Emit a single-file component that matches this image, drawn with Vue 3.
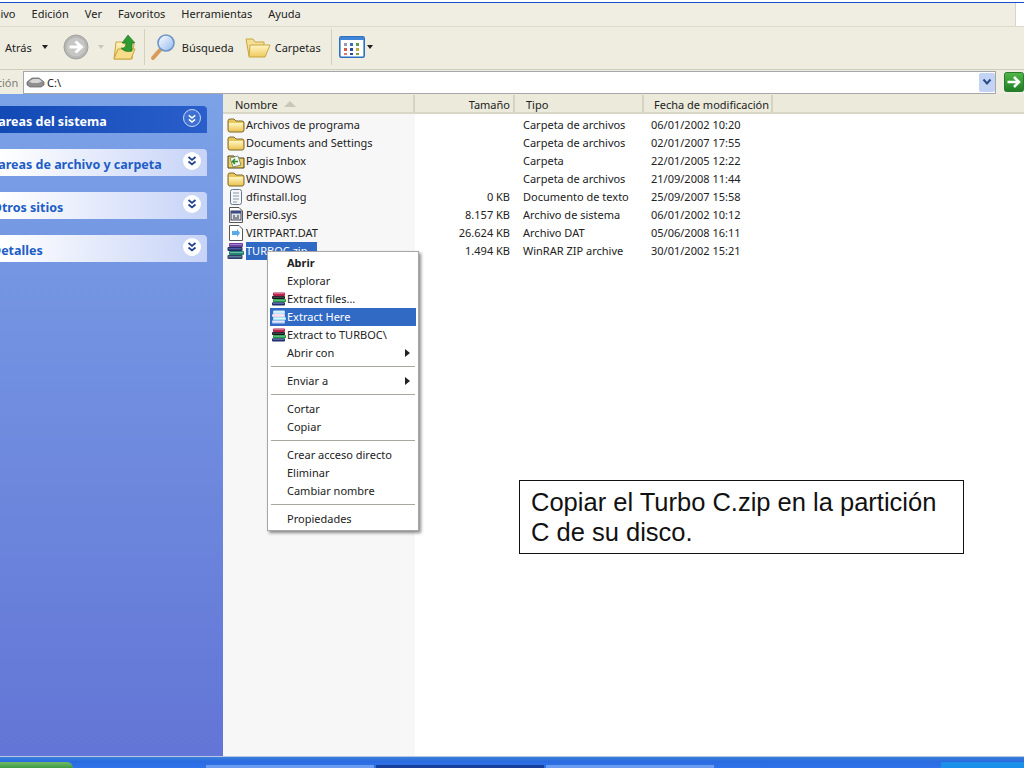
<template>
  <div class="page">
    <svg class="defs" width="0" height="0">
      <defs>
        <linearGradient id="fold" x1="0" y1="0" x2="0" y2="1">
          <stop offset="0" stop-color="#fff6c4" />
          <stop offset="1" stop-color="#efc95e" />
        </linearGradient>
        <linearGradient id="glass" x1="0" y1="0" x2="1" y2="1">
          <stop offset="0" stop-color="#ffffff" />
          <stop offset="1" stop-color="#8fb8ee" />
        </linearGradient>
        <linearGradient id="goBtn" x1="0" y1="0" x2="0" y2="1">
          <stop offset="0" stop-color="#52b848" />
          <stop offset="1" stop-color="#1d7c24" />
        </linearGradient>
        <symbol id="ico-folder" viewBox="0 0 18 16">
          <path d="M1 4 Q1 2 3 2 H7 L9 4 H15 Q17 4 17 6 V13 Q17 15 15 15 H3 Q1 15 1 13 Z" fill="#e9c65c" stroke="#7d6a2c" />
          <path d="M2 6 H16 V13.5 H2 Z" fill="url(#fold)" />
        </symbol>
        <symbol id="ico-inbox" viewBox="0 0 18 16">
          <path d="M1 3 H7 L9 5 H17 V15 H1 Z" fill="#efcf66" stroke="#4c4218" />
          <path d="M3 5 L11 3 L14 12 L6 14 Z" fill="#f4f8ea" stroke="#56705a" stroke-width="0.7" />
          <path d="M5.5 8.5 H11 M8 6 L5.5 8.5 L8 11" fill="none" stroke="#2b8a2c" stroke-width="1.5" />
        </symbol>
        <symbol id="ico-log" viewBox="0 0 16 18">
          <rect x="2.5" y="1.5" width="11" height="15" rx="2" fill="#f5f7f9" stroke="#68768c" />
          <path d="M5 5 H11 M5 8 H11 M5 11 H11 M5 14 H9" stroke="#8a97a8" />
        </symbol>
        <symbol id="ico-sys" viewBox="0 0 16 18">
          <path d="M1.5 1.5 H11 L14.5 5 V16.5 H1.5 Z" fill="#fff" stroke="#555" />
          <rect x="3" y="5" width="10" height="9" fill="#dfe3ec" stroke="#3a3f5a" />
          <rect x="3" y="5" width="10" height="2.5" fill="#3c4a8a" />
          <path d="M5 10 H7 M9 10 H11 M5 12 H11" stroke="#333" />
        </symbol>
        <symbol id="ico-dat" viewBox="0 0 16 18">
          <path d="M1.5 1.5 H11 L14.5 5 V16.5 H1.5 Z" fill="#fff" stroke="#555" />
          <path d="M4 7 H9 V5 L12 9 L9 13 V11 H4 Z" fill="#5aa9e6" />
        </symbol>
        <symbol id="ico-rar" viewBox="0 0 16 14">
          <rect x="2" y="0.5" width="12" height="3.4" rx="1" fill="#b3204a" />
          <path d="M3 1.6 H13" stroke="#f3a8b8" stroke-width="0.6" />
          <rect x="1" y="3.9" width="13" height="3.2" rx="1" fill="#16161c" />
          <path d="M2 5.2 H13" stroke="#8a8a90" stroke-width="0.6" />
          <rect x="2" y="7.1" width="13" height="3.2" rx="1" fill="#1f9a48" />
          <path d="M3 8.2 H14" stroke="#b6eec6" stroke-width="0.6" />
          <rect x="1" y="10.3" width="13" height="3.2" rx="1" fill="#1c2c68" />
          <path d="M2 11.6 H13" stroke="#8a9ad8" stroke-width="0.6" />
        </symbol>
        <symbol id="ico-rar-sel" viewBox="0 0 16 14">
          <rect x="2" y="0.5" width="12" height="3.4" rx="1" fill="#bfe4f8" />
          <path d="M3 1.8 H13" stroke="#ffffff" stroke-width="0.7" />
          <rect x="1" y="3.9" width="13" height="3.2" rx="1" fill="#f1d0e8" />
          <path d="M2 5.2 H13" stroke="#ffffff" stroke-width="0.7" />
          <rect x="2" y="7.1" width="13" height="3.2" rx="1" fill="#a8e4ee" />
          <path d="M3 8.4 H14" stroke="#ffffff" stroke-width="0.7" />
          <rect x="1" y="10.3" width="13" height="3.2" rx="1" fill="#bcd0f6" />
          <path d="M2 11.6 H13" stroke="#ffffff" stroke-width="0.7" />
        </symbol>
        <symbol id="ico-rar-file" viewBox="0 0 18 18">
          <rect x="2" y="1" width="14" height="4" rx="1" fill="#6a3f9e" />
          <path d="M3 2.6 H15" stroke="#c4a6e6" stroke-width="0.7" />
          <rect x="0.5" y="5" width="15" height="4" rx="1" fill="#1f2f6a" />
          <path d="M1.5 6.8 H14.5" stroke="#7e8fd0" stroke-width="0.7" />
          <rect x="2" y="9" width="15" height="4" rx="1" fill="#22806c" />
          <path d="M3 10.6 H16" stroke="#9fe0d0" stroke-width="0.7" />
          <rect x="0.5" y="13" width="15" height="4" rx="1" fill="#2b4468" />
          <path d="M1.5 14.8 H14.5" stroke="#a0b4d0" stroke-width="0.7" />
        </symbol>
        <symbol id="ico-chev" viewBox="0 0 18 18">
          <path d="M5.5 5 L9 8 L12.5 5 M5.5 9.5 L9 12.5 L12.5 9.5" fill="none" stroke="currentColor" stroke-width="1.7" />
        </symbol>
      </defs>
    </svg>

    <div class="menubar">
      <div class="menu-items">
        <span v-for="m in menus" :key="m">{{ m }}</span>
      </div>
      <div class="flag"></div>
    </div>

    <div class="toolbar">
      <span class="back-label">Atrás</span>
      <span class="tri back-tri"></span>
      <svg class="forward" width="26" height="26" viewBox="0 0 26 26">
        <circle cx="13" cy="13" r="12" fill="#b6b6b4" stroke="#a2a2a0" />
        <circle cx="13" cy="13" r="9.5" fill="#c6c6c4" />
        <path d="M6.5 13 H17 M12.5 7.5 L18.5 13 L12.5 18.5" fill="none" stroke="#fff" stroke-width="3" />
      </svg>
      <span class="tri tri-pale"></span>
      <svg class="up" width="24" height="26" viewBox="0 0 24 26">
        <path d="M3 8 H9 L11 10 H21 L19 25 H1 Z" fill="url(#fold)" stroke="#c9a63e" />
        <path d="M5 15 H22 L18 25 H1 Z" fill="#f7dd8a" stroke="#c9a63e" />
        <path d="M15 1 L22 9 H19 V17 Q12 19 8 14 Q13 15 13 9 H9 Z" fill="#2e9b32" stroke="#1b6d20" stroke-width="0.6" />
      </svg>
      <div class="tool-sep"></div>
      <svg class="search" width="28" height="28" viewBox="0 0 28 28">
        <path d="M10 17 L3 25" stroke="#d99a5a" stroke-width="4" stroke-linecap="round" />
        <circle cx="16" cy="10" r="8" fill="url(#glass)" stroke="#6f94c6" stroke-width="1.6" />
      </svg>
      <span class="tool-label">Búsqueda</span>
      <svg class="folders" width="26" height="24" viewBox="0 0 26 24">
        <path d="M1 4 H8 L10 7 H19 V21 H4 Z" fill="#f4df98" stroke="#c9a63e" />
        <path d="M5 10 H25 L20 22 H4 Z" fill="url(#fold)" stroke="#c9a63e" />
      </svg>
      <span class="tool-label carpetas">Carpetas</span>
      <div class="tool-sep second"></div>
      <svg class="views" width="26" height="22" viewBox="0 0 26 22">
        <rect x="0.8" y="0.8" width="24.4" height="20.4" rx="1.5" fill="#fff" stroke="#2e6fc2" stroke-width="1.6" />
        <rect x="1" y="1" width="24" height="3" fill="#3f86d8" />
        <g>
          <rect x="5" y="7" width="3" height="3" fill="#9a9ab0" />
          <rect x="11" y="7" width="3" height="3" fill="#3c6cc0" />
          <rect x="17" y="7" width="3" height="3" fill="#5aa048" />
          <rect x="5" y="12" width="3" height="3" fill="#d85a4a" />
          <rect x="11" y="12" width="3" height="3" fill="#2b4a9a" />
          <rect x="17" y="12" width="3" height="3" fill="#c8a83a" />
          <rect x="5" y="17" width="3" height="2" fill="#e07a6a" />
          <rect x="11" y="17" width="3" height="2" fill="#2b4a9a" />
          <rect x="17" y="17" width="3" height="2" fill="#8a9a3a" />
        </g>
      </svg>
      <span class="tri view-tri"></span>
    </div>

    <div class="address">
      <span class="addr-label">Dirección</span>
      <div class="addr-input">
        <svg width="19" height="12" viewBox="0 0 19 12">
          <path d="M1 6 L6 2 H13 L18 6 V9 L15 11 H4 L1 9 Z" fill="#8f8f8f" stroke="#5c5c5c" stroke-width="0.7" />
          <path d="M3 5.5 L7 3 H13 L16 5.5 L12 7 H6 Z" fill="#d6d6d6" />
        </svg>
        <span class="addr-text">C:\</span>
        <div class="addr-drop">
          <svg width="10" height="8" viewBox="0 0 10 8">
            <path d="M1.5 1.5 L5 5.5 L8.5 1.5" fill="none" stroke="#2c4a86" stroke-width="2" />
          </svg>
        </div>
      </div>
      <svg class="go" width="20" height="20" viewBox="0 0 20 20">
        <rect x="0.5" y="0.5" width="19" height="19" rx="2" fill="url(#goBtn)" stroke="#2a7a2e" />
        <path d="M3.5 10 H14 M10 5 L15 10 L10 15" fill="none" stroke="#fff" stroke-width="2.6" />
      </svg>
    </div>

    <div class="main">
      <aside class="sidebar">
        <div v-for="(p, i) in panels" :key="p" class="panel" :class="{ primary: i === 0 }">
          <span class="panel-title">{{ p }}</span>
          <span class="chev-wrap">
            <svg width="18" height="18"><use href="#ico-chev" /></svg>
          </span>
        </div>
      </aside>

      <section class="files">
        <div class="file-grid head">
          <div class="h-name">Nombre <span class="sort"></span></div>
          <div class="h-size">Tamaño</div>
          <div class="h-type">Tipo</div>
          <div class="h-date">Fecha de modificación</div>
        </div>
        <div class="file-body">
          <div class="name-col"></div>
          <div v-for="f in files" :key="f.name" class="file-grid row">
            <div class="c-name">
              <svg class="file-ico" width="18" height="18"><use :href="'#ico-' + f.icon" /></svg>
              <span :class="{ sel: f.selected }">{{ f.name }}</span>
            </div>
            <div class="c-size">{{ f.size }}</div>
            <div class="c-type">{{ f.type }}</div>
            <div class="c-date">{{ f.date }}</div>
          </div>
        </div>
      </section>
    </div>

    <div class="taskbar">
      <div class="start"></div>
      <div class="tasks">
        <div class="task"></div>
        <div class="task active"></div>
        <div class="task"></div>
      </div>
      <div class="tray"></div>
    </div>

    <div class="ctx">
      <template v-for="(it, i) in ctxItems" :key="i">
        <div v-if="it.sep" class="ctx-sep"></div>
        <div v-else class="ctx-item" :class="{ hot: it.hot, strong: it.strong }">
          <svg v-if="it.rar" class="ctx-ico" width="16" height="14">
            <use :href="it.hot ? '#ico-rar-sel' : '#ico-rar'" />
          </svg>
          <span>{{ it.label }}</span>
          <span v-if="it.sub" class="ctx-arrow"></span>
        </div>
      </template>
    </div>

    <div class="note">Copiar el Turbo C.zip en la partición C de su disco.</div>
  </div>
</template>

<script setup>
const menus = ["Archivo", "Edición", "Ver", "Favoritos", "Herramientas", "Ayuda"]

const panels = [
  "Tareas del sistema",
  "Tareas de archivo y carpeta",
  "Otros sitios",
  "Detalles"
]

const files = [
  { name: "Archivos de programa", size: "", type: "Carpeta de archivos", date: "06/01/2002 10:20", icon: "folder" },
  { name: "Documents and Settings", size: "", type: "Carpeta de archivos", date: "02/01/2007 17:55", icon: "folder" },
  { name: "Pagis Inbox", size: "", type: "Carpeta", date: "22/01/2005 12:22", icon: "inbox" },
  { name: "WINDOWS", size: "", type: "Carpeta de archivos", date: "21/09/2008 11:44", icon: "folder" },
  { name: "dfinstall.log", size: "0 KB", type: "Documento de texto", date: "25/09/2007 15:58", icon: "log" },
  { name: "Persi0.sys", size: "8.157 KB", type: "Archivo de sistema", date: "06/01/2002 10:12", icon: "sys" },
  { name: "VIRTPART.DAT", size: "26.624 KB", type: "Archivo DAT", date: "05/06/2008 16:11", icon: "dat" },
  { name: "TURBOC.zip", size: "1.494 KB", type: "WinRAR ZIP archive", date: "30/01/2002 15:21", icon: "rar-file", selected: true }
]

const ctxItems = [
  { label: "Abrir", strong: true },
  { label: "Explorar" },
  { label: "Extract files...", rar: true },
  { label: "Extract Here", rar: true, hot: true },
  { label: "Extract to TURBOC\\", rar: true },
  { label: "Abrir con", sub: true },
  { sep: true },
  { label: "Enviar a", sub: true },
  { sep: true },
  { label: "Cortar" },
  { label: "Copiar" },
  { sep: true },
  { label: "Crear acceso directo" },
  { label: "Eliminar" },
  { label: "Cambiar nombre" },
  { sep: true },
  { label: "Propiedades" }
]
</script>

<style>
html,
body {
  margin: 0;
  overflow: hidden;
}
</style>

<style scoped>
.page {
  position: relative;
  width: 1024px;
  height: 768px;
  overflow: hidden;
  display: flex;
  flex-direction: column;
  background: #fff;
  font-family: "Noto Sans", "Liberation Sans", sans-serif;
  font-size: 11px;
  color: #222;
}

.defs {
  position: absolute;
}

/* menu */
.menubar {
  height: 25px;
  margin-top: 2px;
  display: flex;
  background: #f0eee2;
  border-top: 1px solid #1550d0;
  box-sizing: border-box;
  border-bottom: 1px solid #dcdacb;
}

.menu-items {
  flex: 1;
  display: flex;
  align-items: center;
  gap: 16px;
  margin-left: -23px;
  padding-bottom: 2px;
}

.flag {
  width: 8px;
  background: #fff;
  border-left: 1px solid #d6d3c2;
}

/* toolbar */
.toolbar {
  height: 43px;
  display: flex;
  align-items: center;
  padding-bottom: 2px;
  background: #efede0;
  border-bottom: 1px solid #cfcdbd;
  box-sizing: border-box;
}

.back-label {
  margin-left: 5px;
}

.tri {
  width: 0;
  height: 0;
  border-left: 3.5px solid transparent;
  border-right: 3.5px solid transparent;
  border-top: 4px solid #222;
}

.back-tri {
  margin-left: 10px;
}

.forward {
  margin-left: 15px;
}

.tri-pale {
  margin-left: 9px;
  border-top-color: #c8c8c0;
}

.up {
  margin-left: 9px;
}

.tool-sep {
  width: 1px;
  height: 36px;
  margin-left: 7px;
  background: #d3d0bf;
}

.search {
  margin-left: 5px;
}

.tool-label {
  margin-left: 4px;
}

.folders {
  margin-left: 11px;
}

.carpetas {
  margin-left: 4px;
}

.second {
  margin-left: 10px;
}

.views {
  margin-left: 7px;
}

.view-tri {
  margin-left: 2px;
}

/* address */
.address {
  height: 24px;
  display: flex;
  align-items: center;
  background: #efede0;
  position: relative;
}

.addr-label {
  margin-left: -30px;
  width: 53px;
  color: #7d7c73;
  white-space: nowrap;
  flex: none;
}

.addr-input {
  width: 973px;
  height: 23px;
  box-sizing: border-box;
  border: 1px solid #a7a6aa;
  background: #fff;
  display: flex;
  align-items: center;
  padding-left: 2px;
  gap: 2px;
  flex: none;
}

.addr-text {
  flex: 1;
}

.addr-drop {
  width: 16px;
  height: 19px;
  background: #c3d3f5;
  border-radius: 2px;
  display: flex;
  align-items: center;
  justify-content: center;
}

.go {
  margin-left: 8px;
  flex: none;
}

/* main */
.main {
  flex: 1;
  display: flex;
  min-height: 0;
}

.sidebar {
  width: 223px;
  flex: none;
  box-sizing: border-box;
  padding-top: 12px;
  padding-right: 16px;
  display: flex;
  flex-direction: column;
  gap: 16px;
  background: linear-gradient(#7ba2e7, #6375d6);
}

.panel {
  height: 27px;
  display: flex;
  align-items: center;
  justify-content: space-between;
  border-radius: 0 4px 0 0;
  background: linear-gradient(90deg, #fff, #c6d3f7);
  color: #215dc6;
  font-size: 12.5px;
  font-weight: 700;
  overflow: hidden;
}

.panel.primary {
  background: linear-gradient(90deg, #124ab5, #2a5fcb);
  color: #fff;
}

.panel-title {
  margin-left: -8px;
  padding-top: 4px;
  white-space: nowrap;
}

.chev-wrap {
  width: 18px;
  height: 18px;
  margin-right: 6px;
  margin-top: -3px;
  border-radius: 50%;
  background: #fff;
  color: #1c3f8e;
  display: flex;
}

.primary .chev-wrap {
  background: #3e71d3;
  color: #fff;
  border: 1px solid #c9d8f5;
  box-sizing: border-box;
}

.files {
  flex: 1;
  display: flex;
  flex-direction: column;
  min-width: 0;
}

.file-grid {
  display: grid;
  grid-template-columns: 192px 100px 129px 129px;
}

.head {
  height: 20px;
  align-items: center;
  background: #ebeadb;
  border-bottom: 2px solid #d8d6c6;
  box-sizing: border-box;
  padding-top: 1px;
  white-space: nowrap;
}

.head > div {
  height: 17px;
  line-height: 20px;
  border-right: 2px solid #d6d3c2;
  box-sizing: border-box;
}

.h-name {
  padding-left: 12px;
}

.sort {
  display: inline-block;
  width: 0;
  height: 0;
  margin-left: 4px;
  margin-bottom: 2px;
  border-left: 6px solid transparent;
  border-right: 6px solid transparent;
  border-bottom: 6px solid #c9c7b6;
}

.h-size {
  text-align: right;
  padding-right: 3px;
}

.h-type {
  padding-left: 11px;
}

.h-date {
  padding-left: 10px;
}

.file-body {
  flex: 1;
  position: relative;
  padding-top: 2px;
}

.name-col {
  position: absolute;
  left: 0;
  top: 0;
  bottom: 0;
  width: 192px;
  background: #f7f7f7;
}

.row {
  position: relative;
  height: 18px;
  align-items: center;
  white-space: nowrap;
}

.c-size,
.c-type,
.c-date,
.c-name span {
  padding-bottom: 1px;
}

.c-name {
  display: flex;
  align-items: center;
  padding-left: 4px;
  gap: 1px;
}

.file-ico {
  flex: none;
}

.sel {
  background: #316ac5;
  color: #fff;
  width: 71px;
  line-height: 17px;
}

.c-size {
  text-align: right;
  padding-right: 5px;
}

.c-type {
  padding-left: 8px;
}

.c-date {
  padding-left: 7px;
}

/* taskbar */
.taskbar {
  height: 11px;
  flex: none;
  display: flex;
  align-items: flex-end;
  background: linear-gradient(#3a7fd8 0, #2a6ce0 40%, #2f72ea);
  border-top: 1px solid #b8c6e8;
  box-sizing: content-box;
}

.start {
  width: 73px;
  height: 6px;
  background: linear-gradient(#6fbb6a, #3f9a45);
  border-radius: 0 6px 0 0;
}

.tasks {
  margin-left: 133px;
  width: 735px;
  display: flex;
  gap: 2px;
}

.task {
  width: 168px;
  height: 3px;
  background: #6a9cf0;
}

.task.active {
  background: #153f9a;
}

.tray {
  flex: 1;
  height: 6px;
  background: #1a90e8;
}

/* context menu */
.ctx {
  position: absolute;
  left: 267px;
  top: 251px;
  width: 152px;
  height: 280px;
  box-sizing: border-box;
  padding: 2px 2px 0;
  background: #fff;
  border: 1px solid #a7a6aa;
  box-shadow: 2px 2px 3px rgba(0, 0, 0, 0.45);
}

.ctx-item {
  position: relative;
  height: 18px;
  padding-left: 17px;
  padding-bottom: 1px;
  box-sizing: border-box;
  display: flex;
  align-items: center;
  white-space: nowrap;
}

.ctx-item.hot {
  background: #316ac5;
  color: #fff;
}

.ctx-item.strong {
  font-weight: 700;
}

.ctx-ico {
  position: absolute;
  left: 1px;
  top: 2px;
}

.ctx-arrow {
  position: absolute;
  right: 6px;
  top: 5px;
  width: 0;
  height: 0;
  border-top: 4px solid transparent;
  border-bottom: 4px solid transparent;
  border-left: 5px solid #222;
}

.ctx-sep {
  height: 1px;
  margin: 4px 1px 5px;
  background: #a9a89c;
}

/* slide note */
.note {
  position: absolute;
  left: 519px;
  top: 480px;
  width: 445px;
  height: 74px;
  box-sizing: border-box;
  padding: 6px 11px;
  background: #fff;
  border: 1px solid #111;
  font-family: "Liberation Sans", Arial, sans-serif;
  font-size: 25.5px;
  line-height: 30px;
  color: #111;
}
</style>
